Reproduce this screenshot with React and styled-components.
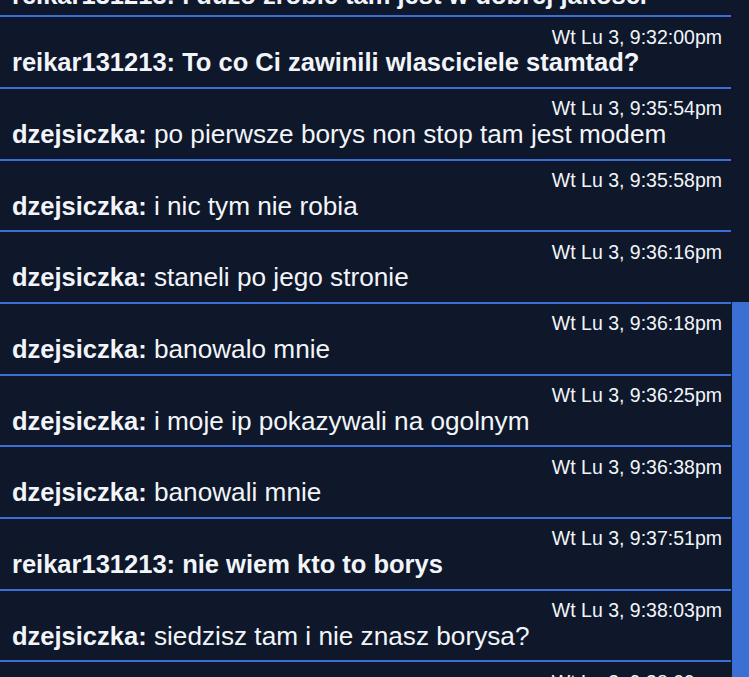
import React from "react";
import styled, { createGlobalStyle } from "styled-components";

const GlobalStyle = createGlobalStyle`
  html, body {
    margin: 0;
    padding: 0;
    background: #0f172a;
    overflow: hidden;
  }
  body {
    font-family: "Liberation Sans", Arial, sans-serif;
    color: #f1f5f9;
  }
`;

const Page = styled.div`
  display: flex;
  height: 677px;
  width: 749px;
  overflow: hidden;
  background: #0f172a;
`;

const Chat = styled.div`
  flex: 1;
  overflow: hidden;
`;

const List = styled.div`
  display: flex;
  flex-direction: column;
  margin-top: -54.4px;
`;

const Row = styled.div`
  display: flex;
  flex-direction: column;
  box-sizing: border-box;
  height: 71.67px;
  padding: 8.5px 9px 0 12px;
  border-bottom: 2px solid #3b6fd6;
  flex-shrink: 0;
`;

const Time = styled.div`
  text-align: right;
  font-size: 19.5px;
  line-height: 22px;
  color: #f1f5f9;
`;

const Message = styled.div`
  margin-top: ${(p) => (p.$shift ? "4.6px" : "0.7px")};
  font-size: ${(p) => (p.$bold ? "25.5px" : "26.2px")};
  line-height: 28px;
  white-space: nowrap;
  font-weight: ${(p) => (p.$bold ? 700 : 400)};
`;

const User = styled.span`
  font-weight: 700;
  font-size: 25.5px;
`;

const Track = styled.div`
  width: 18px;
  display: flex;
  flex-direction: column;
  background: #0f172a;
`;

const Thumb = styled.div`
  margin-top: 302px;
  margin-left: 1px;
  flex: 1;
  background: #3a6fd4;
`;

const messages = [
  { t: "Wt Lu 3, 9:31:41pm", u: "reikar131213", m: "i duzo zrobic tam jest w dobrej jakosci", b: true },
  { t: "Wt Lu 3, 9:32:00pm", u: "reikar131213", m: "To co Ci zawinili wlasciciele stamtad?", b: true },
  { t: "Wt Lu 3, 9:35:54pm", u: "dzejsiczka", m: "po pierwsze borys non stop tam jest modem" },
  { t: "Wt Lu 3, 9:35:58pm", u: "dzejsiczka", m: "i nic tym nie robia" },
  { t: "Wt Lu 3, 9:36:16pm", u: "dzejsiczka", m: "staneli po jego stronie" },
  { t: "Wt Lu 3, 9:36:18pm", u: "dzejsiczka", m: "banowalo mnie" },
  { t: "Wt Lu 3, 9:36:25pm", u: "dzejsiczka", m: "i moje ip pokazywali na ogolnym" },
  { t: "Wt Lu 3, 9:36:38pm", u: "dzejsiczka", m: "banowali mnie" },
  { t: "Wt Lu 3, 9:37:51pm", u: "reikar131213", m: "nie wiem kto to borys", b: true },
  { t: "Wt Lu 3, 9:38:03pm", u: "dzejsiczka", m: "siedzisz tam i nie znasz borysa?" },
  { t: "Wt Lu 3, 9:38:09pm", u: "dzejsiczka", m: "no wiec" },
];

export default function App() {
  return (
    <>
      <GlobalStyle />
      <Page>
        <Chat>
          <List>
            {messages.map((msg, i) => (
              <Row key={i}>
                <Time>{msg.t}</Time>
                <Message $bold={msg.b} $shift={i === 0}>
                  <User>{msg.u}:</User> {msg.m}
                </Message>
              </Row>
            ))}
          </List>
        </Chat>
        <Track>
          <Thumb />
        </Track>
      </Page>
    </>
  );
}
